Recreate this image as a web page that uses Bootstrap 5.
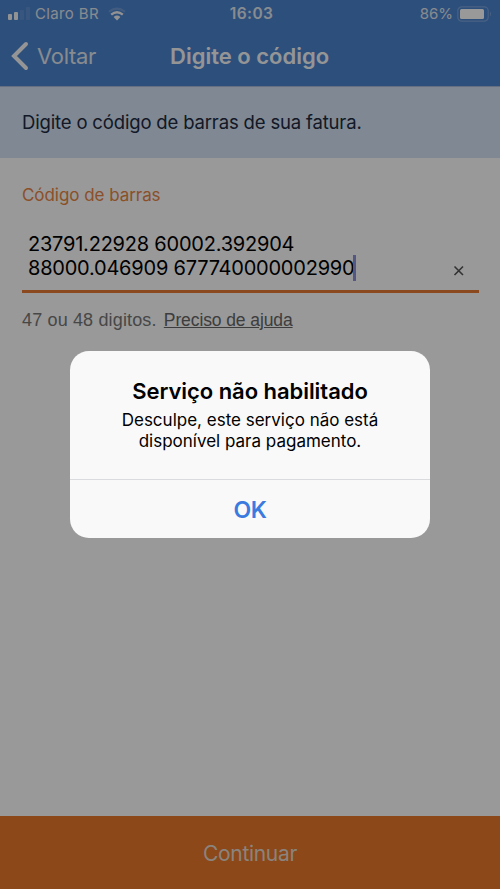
<!doctype html>
<html lang="pt-BR">

<head>
    <meta charset="UTF-8">
    <meta name="viewport" content="width=device-width, initial-scale=1.0">
    <title>Digite o código</title>
    <link href="https://cdn.jsdelivr.net/npm/bootstrap@5.3.0/dist/css/bootstrap.min.css" rel="stylesheet">
    <style>
        body {
            font-family: Inter, "Liberation Sans", sans-serif;
            height: 889px;
            overflow: hidden;
            color: #000;
        }

        .top-area {
            height: 87px;
            background: #4b84cf;
            border-bottom: 1px solid #a9bddb;
            color: #f8f9fa;
        }

        .status-bar {
            height: 28px;
            padding: 0 8px;
            font-size: 15px;
            line-height: 28px;
            color: #e3e8ee;
        }

        .status-bar .carrier { letter-spacing: .35px; margin-left: 4px; }
        .status-bar .clock { font-size: 15.5px; font-weight: 600; letter-spacing: .45px; padding-left: 3px; }
        .status-bar .percent { letter-spacing: 0; margin-right: 4px; }

        .title-bar {
            height: 56px;
            padding-left: 11px;
        }

        .side { width: 150px; }

        .back-label {
            font-size: 22px;
            color: #e3e8ee;
            margin-left: 8px;
            letter-spacing: -.3px;
        }

        .page-title {
            font-size: 22px;
            font-weight: 600;
            letter-spacing: 0;
            margin-left: 9px;
        }

        .intro {
            height: 71px;
            padding: 1px 22px 0;
            background: #d5e3f5;
            font-size: 18.5px;
            color: #202a40;
            letter-spacing: -.16px;
        }

        .field-area { padding: 26px 21px 0 22px; }

        .field-label {
            font-size: 17px;
            line-height: 22px;
            color: #e98545;
            letter-spacing: -.05px;
        }

        .code-field {
            height: 87px;
            padding: 26px 12px 0 6px;
            border-bottom: 3px solid #e67a33;
        }

        .code-text {
            font-size: 20px;
            line-height: 24px;
            letter-spacing: -.22px;
        }

        .caret {
            display: inline-block;
            width: 3px;
            height: 26px;
            margin: -3px 0 -6px -1px;
            vertical-align: baseline;
            background: #8c92dc;
        }

        .hint {
            margin-top: 16px;
            font-family: "Liberation Sans", sans-serif;
            font-size: 18px;
            line-height: 22px;
            letter-spacing: .15px;
            color: #777;
        }

        .hint a {
            color: #666;
            margin-left: 2px;
            font-size: 17.5px;
            letter-spacing: -.1px;
        }

        .continue-btn {
            height: 73px;
            padding-top: 2px;
            background: #e97828;
            color: #e6dbd2;
            font-size: 21px;
            letter-spacing: -.3px;
        }

        .modal-backdrop { --bs-backdrop-opacity: .4; }

        .modal-dialog.alert-box {
            width: 360px;
            margin: 351px auto 0;
        }

        .alert-box .modal-content {
            height: 187px;
            border: 0;
            border-radius: 19px;
            background: #f9f9fa;
            color: #000;
        }

        .alert-box .modal-body { padding: 27px 0 0; }

        .alert-title {
            font-size: 22px;
            font-weight: 600;
            line-height: 26px;
            letter-spacing: -.05px;
            margin-bottom: 6px;
        }

        .alert-text {
            font-size: 17px;
            line-height: 21px;
        }

        .ok-btn {
            height: 59px;
            padding-top: 2px;
            border-top: 1px solid #dadbdf;
            color: #3b7be0;
            font-size: 23px;
            font-weight: 600;
            letter-spacing: -.3px;
        }
    </style>
</head>

<body class="d-flex flex-column">
    <header class="top-area">
        <div class="status-bar d-flex align-items-center">
            <div class="side d-flex align-items-center flex-fill">
                <svg width="23" height="14" viewBox="0 0 23 14">
                    <rect x="0" y="7" width="4" height="6" rx="1" fill="#f4f4f4" />
                    <rect x="6" y="5" width="4" height="8" rx="1" fill="#f4f4f4" />
                    <rect x="12" y="3" width="4" height="10" rx="1" fill="#5f8fd2" />
                    <rect x="18" y="0" width="4" height="13" rx="1" fill="#5f8fd2" />
                </svg>
                <span class="carrier">Claro BR</span>
                <svg class="ms-2" width="20" height="14" viewBox="0 0 20 14" fill="none">
                    <path d="M2 4.8Q10-1.6 18 4.8" stroke="#6f9ad6" stroke-width="2" />
                    <path d="M4.2 7.6Q10 2.8 15.8 7.6" stroke="#f4f4f4" stroke-width="2.4" />
                    <path d="M6.6 9.9Q10 7.2 13.4 9.9L10 13.4Z" fill="#f4f4f4" />
                </svg>
            </div>
            <span class="clock">16:03</span>
            <div class="side d-flex align-items-center justify-content-end flex-fill">
                <span class="percent">86%</span>
                <svg width="35" height="16" viewBox="0 0 35 16">
                    <rect x=".8" y=".8" width="30.4" height="14.4" rx="4" fill="none" stroke="#7ba2da" stroke-width="1.2" />
                    <rect x="3" y="3" width="24" height="10" rx="1.5" fill="#fff" />
                    <path d="M33 5.5q2 2.5 0 5z" fill="#7ba2da" />
                </svg>
            </div>
        </div>
        <nav class="title-bar d-flex align-items-center">
            <div class="side d-flex align-items-center">
                <svg width="18" height="30" viewBox="0 0 18 30" fill="none">
                    <path d="M15 3L3 15L15 27" stroke="#f8f9fa" stroke-width="4" stroke-linecap="round" />
                </svg>
                <span class="back-label">Voltar</span>
            </div>
            <span class="page-title">Digite o código</span>
        </nav>
    </header>

    <div class="intro d-flex align-items-center">Digite o código de barras de sua fatura.</div>

    <main class="field-area flex-grow-1">
        <div class="field-label">Código de barras</div>
        <div class="code-field d-flex justify-content-between">
            <div class="code-text text-nowrap">
                <div>23791.22928 60002.392904</div>
                <div>88000.046909 677740000002990<span class="caret"></span></div>
            </div>
            <svg class="mt-4" width="16" height="24" viewBox="0 0 16 24">
                <path d="M3.5 10.5L12 19M12 10.5L3.5 19" stroke="#555" stroke-width="1.6" />
            </svg>
        </div>
        <div class="hint">47 ou 48 digitos. <a href="#">Preciso de ajuda</a></div>
    </main>

    <footer class="continue-btn d-flex align-items-center justify-content-center">Continuar</footer>

    <div class="modal-backdrop show"></div>
    <div class="modal d-block" tabindex="-1" role="dialog">
        <div class="modal-dialog alert-box">
            <div class="modal-content">
                <div class="modal-body text-center">
                    <h1 class="alert-title">Serviço não habilitado</h1>
                    <div class="alert-text">Desculpe, este serviço não está<br>disponível para pagamento.</div>
                </div>
                <div class="ok-btn d-flex align-items-center justify-content-center">OK</div>
            </div>
        </div>
    </div>

    <script src="https://cdn.jsdelivr.net/npm/bootstrap@5.3.0/dist/js/bootstrap.bundle.min.js"></script>
</body>

</html>
